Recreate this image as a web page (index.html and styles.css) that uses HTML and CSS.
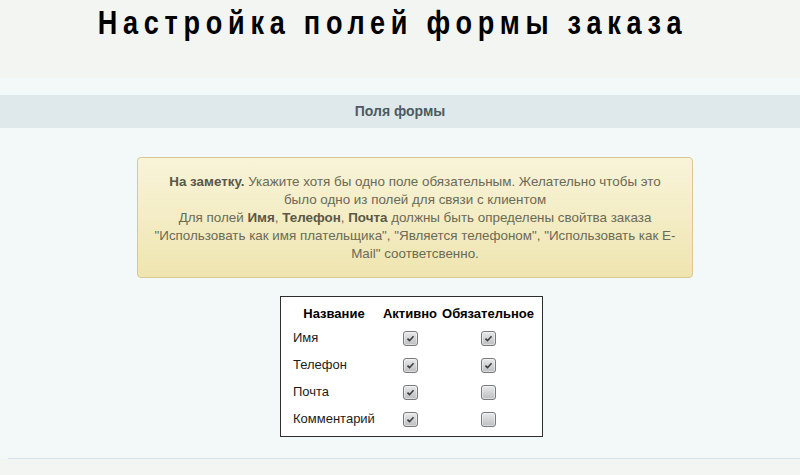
FILE: index.html
```html
<!DOCTYPE html>
<html lang="ru">
<head>
<meta charset="UTF-8">
<title>Настройка полей формы заказа</title>
<link rel="stylesheet" href="styles.css">
</head>
<body>

<h1 class="page-title"><span>Настройка полей формы заказа</span></h1>

<div class="panel">
    <div class="panel-head">Поля формы</div>

    <div class="note">
        <b>На заметку.</b> Укажите хотя бы одно поле обязательным. Желательно чтобы это<br>
        было одно из полей для связи с клиентом<br>
        Для полей <b>Имя</b>, <b>Телефон</b>, <b>Почта</b> должны быть определены свойтва заказа
        "Использовать как имя плательщика", "Является телефоном", "Использовать как E-Mail" соответсвенно.
    </div>

    <div class="fields-wrap">
    <table class="fields">
        <tr>
            <th class="c-name">Название</th>
            <th class="c-act">Активно</th>
            <th class="c-req">Обязательное</th>
        </tr>
        <tr>
            <td class="label">Имя</td>
            <td><span class="cb on"><svg viewBox="0 0 15 15"><path d="M4 7.6l2.4 2.4 4.6-5"/></svg></span></td>
            <td><span class="cb on"><svg viewBox="0 0 15 15"><path d="M4 7.6l2.4 2.4 4.6-5"/></svg></span></td>
        </tr>
        <tr>
            <td class="label">Телефон</td>
            <td><span class="cb on"><svg viewBox="0 0 15 15"><path d="M4 7.6l2.4 2.4 4.6-5"/></svg></span></td>
            <td><span class="cb on"><svg viewBox="0 0 15 15"><path d="M4 7.6l2.4 2.4 4.6-5"/></svg></span></td>
        </tr>
        <tr>
            <td class="label">Почта</td>
            <td><span class="cb on"><svg viewBox="0 0 15 15"><path d="M4 7.6l2.4 2.4 4.6-5"/></svg></span></td>
            <td><span class="cb"></span></td>
        </tr>
        <tr>
            <td class="label">Комментарий</td>
            <td><span class="cb on"><svg viewBox="0 0 15 15"><path d="M4 7.6l2.4 2.4 4.6-5"/></svg></span></td>
            <td><span class="cb"></span></td>
        </tr>
    </table>
    </div>

    <div class="panel-end"></div>
</div>

</body>
</html>
```

FILE: styles.css
```css
*{box-sizing:border-box;}

body{
    margin:0;
    background:#f3f5f2;
    font-family:"Liberation Sans",Arial,sans-serif;
}

/* Title */
.page-title{
    margin:0;
    height:78px;
    padding:3px 16px 0 0;
    text-align:center;
    font-family:"Liberation Sans",Arial,sans-serif;
    font-size:33px;
    line-height:40px;
    font-weight:bold;
    color:#000;
}
.page-title span{
    display:inline-block;
    letter-spacing:7px;
    transform:scaleX(0.82);
}

/* Panel */
.panel{
    background:#f3f9f9;
    padding-top:17px;
}

.panel-head{
    height:33px;
    line-height:33px;
    background:#dfe8ea;
    text-align:center;
    font-size:14px;
    font-weight:bold;
    color:#4c5b61;
}

.note{
    width:556px;
    margin:29px 0 0 137px;
    padding:15px 12px 14px;
    border:1px solid #d9c890;
    border-radius:4px;
    background:linear-gradient(#f8f4d9,#efe5b0);
    text-align:center;
    font-size:13.4px;
    line-height:18px;
    color:#6b6a55;
}
.note b{color:#5a5846;}

/* Fields table */
.fields-wrap{
    text-align:center;
    padding:18px 0 21px 23px;
}

table.fields{
    display:inline-table;
    border:1px solid #2e2e2e;
    background:#fff;
    border-collapse:separate;
    border-spacing:0;
    padding:5px 7px 4px 8px;
    font-size:13px;
    color:#1c1c1c;
}

.fields th{
    height:22px;
    padding:0;
    font-size:13px;
    font-weight:bold;
    color:#000;
    white-space:nowrap;
}

.fields td{
    height:27px;
    padding:0;
    text-align:center;
    vertical-align:middle;
}

.fields .c-name{width:90px;}
.fields .c-act{width:62px;}
.fields .c-req{width:94px;}

.fields td.label{
    text-align:left;
    padding-left:4px;
}

/* Checkbox look */
.cb{
    display:inline-block;
    width:15px;
    height:15px;
    vertical-align:middle;
    border:1px solid #77797b;
    border-radius:3px;
    background:linear-gradient(#e8e9ea,#bcbec0);
    box-shadow:inset 0 0 0 1px rgba(255,255,255,0.45);
}
.cb svg{
    display:block;
    width:13px;
    height:13px;
}
.cb svg path{
    fill:none;
    stroke:#3a3b3d;
    stroke-width:1.8;
}

.panel-end{
    height:1px;
    margin-left:8px;
    background:#d5e3e8;
}
```
